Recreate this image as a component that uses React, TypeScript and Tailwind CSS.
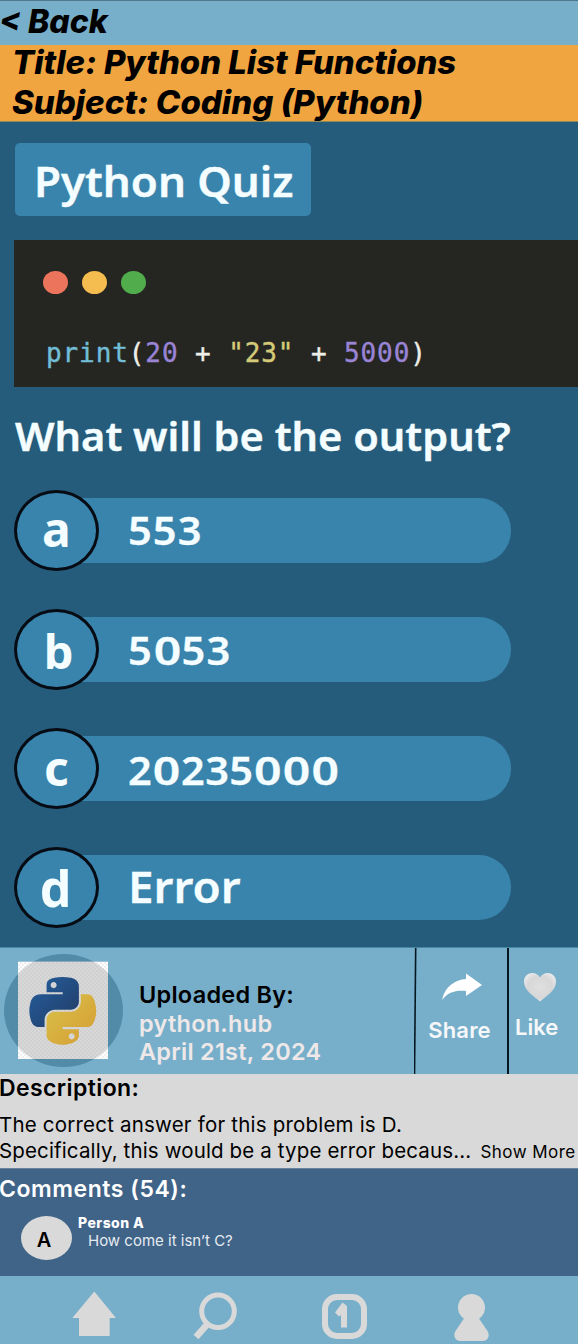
import type { ReactNode } from "react";

const quizFont = "font-['Noto_Sans',sans-serif] font-semibold text-[#f4fdff]";

function WideZero() {
  return (
    <span className="inline-block w-[27px] text-center">
      <span className="inline-block origin-center scale-x-[1.16] tracking-normal">0</span>
    </span>
  );
}

function Option({ letter, letterClass, children, textClass }: {
  letter: string;
  letterClass: string;
  children: ReactNode;
  textClass: string;
}) {
  return (
    <li className="flex h-[81px] items-center">
      <span className={"z-10 flex h-[81px] w-[85px] shrink-0 items-center justify-center rounded-[50%] border-3 border-[#060b14] bg-[#3984ac] leading-none " + letterClass}>
        {letter}
      </span>
      <span className={"-ml-[40px] flex h-[65px] w-[452px] items-center rounded-r-[32px] bg-[#3984ac] pl-[68.5px] leading-none whitespace-nowrap " + textClass}>
        <span className="inline-block origin-left scale-x-[1.065] [-webkit-text-stroke:0.3px]">{children}</span>
      </span>
    </li>
  );
}

function PythonLogo() {
  return (
    <svg className="block h-[114px] w-[120px]" viewBox="0 0 120 114">
      <defs>
        <pattern id="checks" width="4" height="4" patternUnits="userSpaceOnUse">
          <rect width="4" height="4" fill="#ffffff" />
          <path d="M0 0h2v2H0zM2 2h2v2H2z" fill="#f0f0f0" />
        </pattern>
        <linearGradient id="blue" x1="0" y1="0" x2="1" y2="1">
          <stop offset="0" stopColor="#255f9f" />
          <stop offset="1" stopColor="#213b63" />
        </linearGradient>
        <linearGradient id="gold" x1="0" y1="0" x2="1" y2="1">
          <stop offset="0" stopColor="#d9c34b" />
          <stop offset="1" stopColor="#d59b32" />
        </linearGradient>
        <clipPath id="disc"><ellipse cx="59.5" cy="56.5" rx="59.5" ry="56.5" /></clipPath>
      </defs>
      <ellipse cx="59.5" cy="56.5" rx="59.5" ry="56.5" fill="#528ba8" />
      <rect x="14" y="7.7" width="90" height="97.3" fill="url(#checks)" />
      <rect x="14" y="7.7" width="90" height="97.3" fill="#a6a6a6" fillOpacity=".44" clipPath="url(#disc)" />
      <g transform="translate(25.300 23) scale(.602)">
        <path fill="url(#blue)" d="M54.9.1c-4.6 0-9 .4-12.8 1.1C30.8 3.200 28.700 7.400 28.700 15.200v10.200h26.800v3.400H18.700c-7.800 0-14.600 4.700-16.700 13.600-2.500 10.200-2.600 16.600 0 27.200 1.900 7.900 6.500 13.600 14.200 13.600h9.200V71c0-8.800 7.700-16.700 16.800-16.700H69c7.500 0 13.400-6.100 13.400-13.600V15.200c0-7.300-6.100-12.700-13.400-14-4.600-.8-9.500-1.100-14.100-1.100ZM40.400 8.300c2.800 0 5 2.300 5 5.100s-2.200 5.100-5 5.100-5-2.300-5-5.100 2.200-5.100 5-5.100Z" />
        <path fill="url(#gold)" d="M85.600 28.800v11.900c0 9.200-7.800 17-16.700 17H42.100c-7.300 0-13.400 6.300-13.400 13.600v25.500c0 7.300 6.300 11.500 13.400 13.600 8.500 2.500 16.600 3 26.800 0 6.700-2 13.400-5.900 13.400-13.600V86.600H55.500v-3.400h40.200c7.800 0 10.700-5.400 13.400-13.600 2.800-8.400 2.700-16.500 0-27.200-1.900-7.800-5.600-13.600-13.400-13.600H85.600ZM70.500 93.500c2.800 0 5 2.300 5 5.100s-2.200 5.100-5 5.100-5-2.300-5-5.100 2.200-5.100 5-5.100Z" />
      </g>
    </svg>
  );
}

export default function App() {
  return (
    <main className="flex h-[1344px] w-[578px] flex-col overflow-hidden bg-[#77afcb] font-['Inter',sans-serif] text-black">
      <header className="h-[45px] border-t border-[#50788c] pt-px text-[32px] leading-[40px] font-extrabold italic">
        <a className="-ml-px">&lt; Back</a>
      </header>
      <section className="h-[77px] border-b border-[#8e8958] bg-[#f0a541] pl-[12px] text-[32px] leading-[40.5px] font-extrabold whitespace-nowrap italic">
        <h1 className="-mt-[2.5px] origin-left scale-x-[1.027]">Title: Python List Functions</h1>
        <h2 className="origin-left scale-x-[1.031]">Subject: Coding (Python)</h2>
      </section>

      <section className="h-[825px] bg-[#255c7b] pt-[21px] pl-[14px]">
        <div className={"ml-px flex h-[73px] w-[296px] items-center rounded-[5px] bg-[#3984ac] pt-[3px] pl-[19px] text-[41px] leading-none whitespace-nowrap " + quizFont}>
          <span className="origin-left scale-x-[1.07] [-webkit-text-stroke:0.4px]">Python Quiz</span>
        </div>
        <div className="mt-[24px] h-[147px] bg-[#252621] pt-[31px] pl-[29px]">
          <div className="flex gap-[14px]">
            <span className="h-[23px] w-[25px] rounded-[50%] bg-[#ed745c]" />
            <span className="h-[23px] w-[25px] rounded-[50%] bg-[#f5bd4f]" />
            <span className="h-[23px] w-[25px] rounded-[50%] bg-[#51ad4c]" />
          </div>
          <pre className="mt-[41px] ml-[3px] font-['DejaVu_Sans_Mono',monospace] text-[26px] leading-[36px] tracking-[0.9px] text-[#eeeee8] [-webkit-text-stroke:0.4px]">
            <span className="text-[#72bdd7]">print</span>(<span className="text-[#9984d6]">20</span> + <span className="text-[#d4ca78]">"23"</span> + <span className="text-[#9984d6]">5000</span>)
          </pre>
        </div>
        <p className={"mt-[19px] ml-px h-[61px] origin-left scale-x-[1.065] text-[39px] leading-[60px] whitespace-nowrap [-webkit-text-stroke:0.4px] " + quizFont}>What will be the output?</p>
        <ul className={"mt-[23px] flex flex-col gap-[38px] " + quizFont}>
          <Option letter="a" letterClass="pb-[3px] text-[48px] font-bold" textClass="pb-[2px] text-[39px] tracking-[1px]">553</Option>
          <Option letter="b" letterClass="pt-[3px] pl-[4px] text-[47px] font-bold" textClass="text-[39px] tracking-[1px]">5<WideZero />53</Option>
          <Option letter="c" letterClass="pb-[1px] text-[48px] font-bold" textClass="pt-[2px] text-[39px] tracking-[0.4px]">2<WideZero />235<WideZero /><WideZero /><WideZero /></Option>
          <Option letter="d" letterClass="pr-[2px] text-[50px] font-bold" textClass="pb-[2px] text-[43px]">Error</Option>
        </ul>
      </section>

      <section className="flex h-[127px] border-t border-[#4685a5]">
        <div className="flex w-[414px] pl-[4px]">
          <div className="pt-[6px]"><PythonLogo /></div>
          <div className="pt-[33px] pl-[15px] text-[23.5px] leading-[28.500px] font-semibold tracking-[0.25px] whitespace-nowrap text-[#eee8e9]">
            <p className="text-black">Uploaded By:</p>
            <p>python.hub</p>
            <p>April 21st, 2024</p>
          </div>
        </div>
        <svg className="block h-[127px] w-[3px]" viewBox="0 0 3 127"><path d="M1.700 0 .5 127" stroke="#07171f" strokeWidth="1.600" /></svg>
        <button className="flex w-[90px] flex-col items-center pt-[25px] pr-[5px] text-[22px] font-semibold text-[#f5f7f8]">
          <svg className="ml-[5px] block h-[28px] w-[42px]" viewBox="0 0 42 28"><path d="M1 27C4 13 14 7 25 6V.5l16 11.500-16 11v-5C15 17 7 19 1 27Z" fill="#fff" /></svg>
          <span className="mt-[15px] leading-[28px] tracking-[0.2px]">Share</span>
        </button>
        <button className="flex flex-1 flex-col items-start border-l-2 border-[#07171f] pl-[6px] text-[22px] font-semibold text-[#f5f7f8]">
          <svg className="mt-[24px] ml-[8px] block h-[30px] w-[34px]" viewBox="0 0 34 30">
            <defs><radialGradient id="heart" cx=".5" cy=".5" r=".55"><stop offset="0" stopColor="#dfdfdf" /><stop offset=".7" stopColor="#d7d7d7" /><stop offset="1" stopColor="#e8e8e8" /></radialGradient></defs>
            <path d="M17 29.500C11 24.500 1 18.500 1 9.500 1 0 13-2 17 5.500 21-2 33 0 33 9.500 33 18.500 23 24.500 17 29.500Z" fill="url(#heart)" />
          </svg>
          <span className="mt-[11px] leading-[28px]">Like</span>
        </button>
      </section>

      <section className="h-[94px] bg-[#d9d9d9] whitespace-nowrap">
        <h3 className="-ml-[1px] text-[23px] leading-[28px] font-semibold tracking-[0.4px]">Description:</h3>
        <p className="mt-[10px] -ml-px text-[20.5px] leading-[26px] tracking-[0.2px]">The correct answer for this problem is D.</p>
        <div className="flex items-baseline leading-[26px]">
          <p className="-ml-px w-[481.500px] text-[20.5px] tracking-[0.14px]">Specifically, this would be a type error becaus...</p>
          <button className="text-[17px] tracking-[0.45px]">Show More</button>
        </div>
      </section>

      <section className="h-[108px] border-t border-[#66849c] bg-[#406388] text-white">
        <h3 className="-ml-px pt-[5.5px] text-[23px] leading-[28px] font-semibold tracking-[0.55px]">Comments (54):</h3>
        <div className="flex pt-[13.500px] pl-[21px]">
          <span className="flex h-[44px] w-[51px] items-center justify-center rounded-[50%] bg-[#d9d9d9] pt-[4px] pr-[5px] text-[20px] leading-none font-semibold text-black">A</span>
          <div className="pl-[6px]">
            <p className="-mt-[2px] text-[14px] leading-[18px] font-extrabold tracking-[0.45px]">Person A</p>
            <p className="pl-[10px] text-[15px] leading-[18px] text-[#e5ebf0]">How come it isn’t C?</p>
          </div>
        </div>
      </section>

      <nav className="h-[68px]">
        <svg className="block h-[68px] w-[578px]" viewBox="0 1276 578 68" fill="#d9d9d9">
          <path d="M94.300 1291.500 116 1318h-6.300v18H79v-18h-6.700Z" />
          <circle cx="218" cy="1311.300" r="16.300" fill="none" stroke="#d9d9d9" strokeWidth="5" />
          <path d="m207.500 1324-11.500 13" fill="none" stroke="#d9d9d9" strokeWidth="6.500" />
          <rect x="325" y="1297" width="39" height="39" rx="12" fill="none" stroke="#d9d9d9" strokeWidth="6" />
          <path d="M342.500 1302.500 347 1306v21.500h-6V1315l-2 1.500-4-4Z" />
          <circle cx="471.500" cy="1307.500" r="13.500" />
          <path d="M464 1318.500h15l8.500 12.500c3 5 0 10-5 10h-22c-5 0-8-5-5-10Z" />
        </svg>
      </nav>
    </main>
  );
}
